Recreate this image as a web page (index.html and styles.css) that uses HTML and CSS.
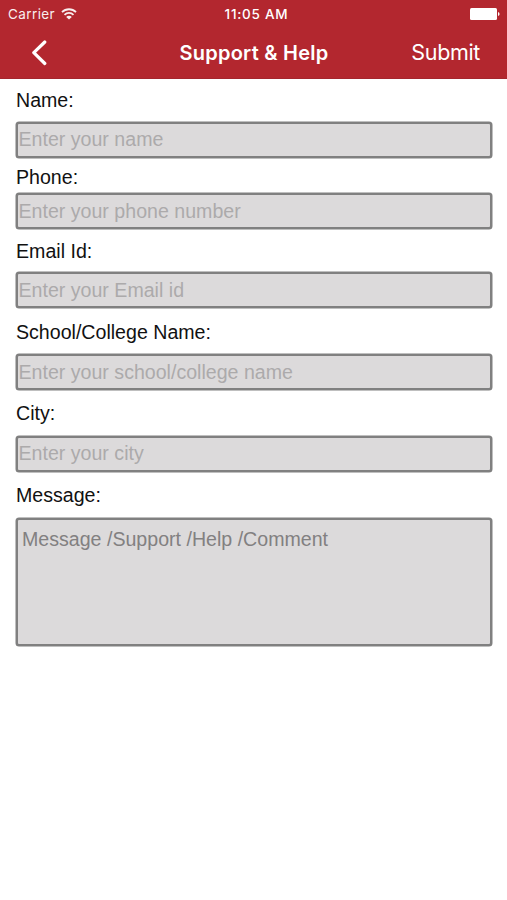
FILE: index.html
```html
<!DOCTYPE html>
<html lang="en">
<head>
<meta charset="utf-8">
<title>Support &amp; Help</title>
<link rel="stylesheet" href="styles.css">
</head>
<body>
<header class="header">
  <div class="status">
    <div class="carrier">
      <span>Carrier</span>
      <svg class="wifi" width="16" height="12" viewBox="0 0 16 12" fill="none" stroke="#fff" stroke-width="1.8">
        <path d="M1 4.1A10 10 0 0 1 15 4.1"/>
        <path d="M3.5 6.8A6.4 6.4 0 0 1 12.5 6.8"/>
        <path d="M8 11.6L5.2 8.9A3.8 3.8 0 0 1 10.8 8.9Z" fill="#fff" stroke="none"/>
      </svg>
    </div>
    <span class="time">11:05 AM</span>
    <svg class="battery" width="30" height="12" viewBox="0 0 30 12" fill="#fff">
      <rect x="0" y="0" width="27" height="12" rx="1.5"/>
      <path d="M28 4Q29.6 4.5 29.6 6T28 8Z"/>
    </svg>
  </div>
  <nav class="nav">
    <svg class="back" width="16" height="26" viewBox="0 0 16 26" fill="none" stroke="#fff" stroke-width="3.2" stroke-linecap="round" stroke-linejoin="round">
      <path d="M13.8 2L2.8 12.7L13.8 23.5"/>
    </svg>
    <h1 class="title">Support &amp; Help</h1>
    <span class="submit">Submit</span>
  </nav>
</header>
<main class="form">
  <div class="group name"><div class="label">Name:</div><div class="field">Enter your name</div></div>
  <div class="group phone"><div class="label">Phone:</div><div class="field">Enter your phone number</div></div>
  <div class="group email"><div class="label">Email Id:</div><div class="field">Enter your Email id</div></div>
  <div class="group school"><div class="label">School/College Name:</div><div class="field">Enter your school/college name</div></div>
  <div class="group city"><div class="label">City:</div><div class="field">Enter your city</div></div>
  <div class="group message"><div class="label">Message:</div><div class="field area">Message /Support /Help /Comment</div></div>
</main>
</body>
</html>
```
FILE: styles.css
```css
* { box-sizing: border-box; }
body {
  margin: 0;
  min-height: 900px;
  background: #fff;
  font-family: "Liberation Sans", Arial, sans-serif;
}
.header {
  height: 79px;
  background: #b3272f;
  border-bottom: 1px solid #a5262e;
  color: #fff;
  font-family: Inter, sans-serif;
}
.status {
  display: grid;
  grid-template-columns: 1fr auto 1fr;
  align-items: center;
  height: 27px;
  padding: 0 7px 0 8px;
  font-size: 13.5px;
}
.carrier { display: flex; align-items: center; gap: 6px; opacity: .92; letter-spacing: .4px; }
.time { padding-left: 5px; font-weight: 500; letter-spacing: .75px; font-size: 13.5px; }
.battery { justify-self: end; }
.nav {
  display: grid;
  grid-template-columns: 1fr auto 1fr;
  align-items: center;
  height: 51px;
  padding: 0 27px 0 31px;
}
.title { margin: 0 3px 0 0; font-size: 20px; font-weight: 600; line-height: 26px; letter-spacing: .26px; }
.submit { justify-self: end; margin-bottom: 2px; font-size: 21.5px; line-height: 26px; letter-spacing: -.35px; }
.form { padding: 10px 15px 0 16px; font-size: 19.6px; }
.label { height: 22px; line-height: 22px; color: #111; white-space: nowrap; }
.field {
  height: 36px;
  margin-top: 11px;
  padding-left: .5px;
  border: 2px solid #808080;
  border-radius: 3px;
  box-shadow: 0 0 0 .5px #808080;
  background: #dcdadb;
  color: #acaaab;
  line-height: 31px;
}
.phone { padding-top: 8px; }
.phone .field { margin-top: 5px; }
.email { padding-top: 11px; }
.email .field { margin-top: 10px; }
.school { padding-top: 13px; }
.phone .field, .email .field, .school .field { line-height: 33px; }
.city, .message { padding-top: 12px; }
.city .field, .message .field { margin-top: 12px; }
.message .area { height: 128px; padding: 4px 0 0 4px; color: #828081; }
```
